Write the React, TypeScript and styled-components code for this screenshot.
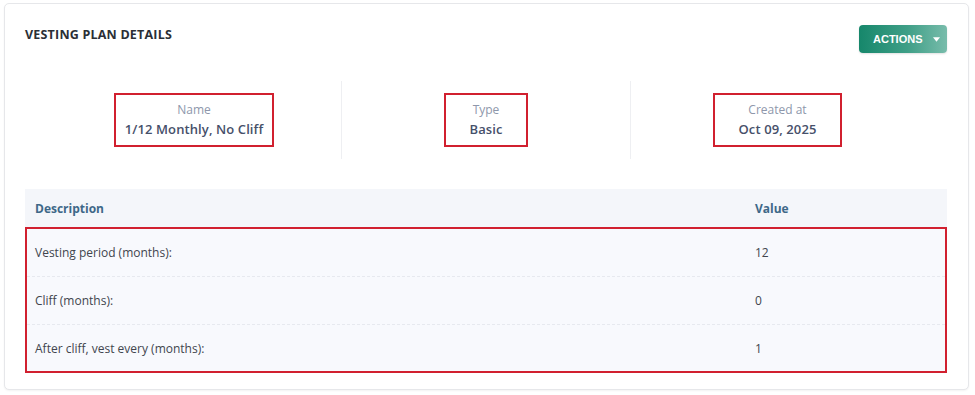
import React from 'react';
import styled, {createGlobalStyle} from 'styled-components';

const GlobalStyle = createGlobalStyle`
  * {
    box-sizing: border-box;
  }

  body {
    margin: 0;
    background: #ffffff;
    font-family: "Open Sans", "Liberation Sans", sans-serif;
  }
`

const infoItems = [
    {label: 'Name', value: '1/12 Monthly, No Cliff', padX: 9},
    {label: 'Type', value: 'Basic', padX: 23},
    {label: 'Created at', value: 'Oct 09, 2025', padX: 24},
];

const rows = [
    {description: 'Vesting period (months):', value: '12'},
    {description: 'Cliff (months):', value: '0'},
    {description: 'After cliff, vest every (months):', value: '1'},
];

export default function App() {
    return (
        <Page>
            <GlobalStyle/>
            <Card>
                <Header>
                    <Title>Vesting Plan Details</Title>
                    <ActionsButton>
                        Actions
                        <Caret viewBox="0 0 8 5">
                            <path d="M0 0 L8 0 L4 5 Z" fill="#ffffff"/>
                        </Caret>
                    </ActionsButton>
                </Header>

                <InfoRow>
                    {infoItems.map((item, index) => (
                        <InfoCell key={item.label} $divider={index > 0}>
                            <Highlight $padX={item.padX}>
                                <InfoLabel>{item.label}</InfoLabel>
                                <InfoValue>{item.value}</InfoValue>
                            </Highlight>
                        </InfoCell>
                    ))}
                </InfoRow>

                <Table>
                    <HeadRow>
                        <HeadCell>Description</HeadCell>
                        <HeadCell>Value</HeadCell>
                    </HeadRow>
                    <Body>
                        {rows.map((row, index) => (
                            <BodyRow key={row.description} $last={index === rows.length - 1}>
                                <BodyCell>{row.description}</BodyCell>
                                <BodyCell>{row.value}</BodyCell>
                            </BodyRow>
                        ))}
                    </Body>
                </Table>
            </Card>
        </Page>
    );
}

const Page = styled.div`
  width: 975px;
  height: 395px;
  padding: 3px 6px 5px 4px;
`

const Card = styled.section`
  height: 100%;
  background: #ffffff;
  border: 1px solid #e6e7ea;
  border-radius: 5px;
  box-shadow: 0 1px 2px rgba(0, 0, 0, 0.05);
  padding: 21px 21px 16px 20px;
  display: flex;
  flex-direction: column;
`

const Header = styled.div`
  display: flex;
  justify-content: space-between;
  align-items: flex-start;
`

const Title = styled.h2`
  margin: 1px 0 0;
  font-size: 12.5px;
  font-weight: 700;
  letter-spacing: 0.2px;
  text-transform: uppercase;
  color: #2b2f36;
`

const ActionsButton = styled.button`
  display: flex;
  align-items: center;
  gap: 10px;
  height: 28px;
  width: 88px;
  padding: 0 0 0 14px;
  border: none;
  border-radius: 4px;
  background: linear-gradient(90deg, #16876b 0%, #3f9f87 55%, #78bcab 100%);
  color: #ffffff;
  font-family: "Liberation Sans", Arial, sans-serif;
  font-size: 11px;
  font-weight: 700;
  text-transform: uppercase;
  box-shadow: 0 1px 2px rgba(0, 0, 0, 0.12);
`

const Caret = styled.svg`
  width: 7px;
  height: 5px;
`

const InfoRow = styled.div`
  display: grid;
  grid-template-columns: 294px 289px 294px;
  margin: 28px 0 0 22px;
  height: 84px;
`

const InfoCell = styled.div<{ $divider: boolean }>`
  display: flex;
  align-items: center;
  justify-content: center;
  border-left: ${({$divider}) => ($divider ? '1px solid #eeeff2' : 'none')};
`

const Highlight = styled.div<{ $padX: number }>`
  display: flex;
  flex-direction: column;
  align-items: center;
  gap: 2px;
  padding: 6px ${({$padX}) => $padX}px 7px;
  border: 2px solid #d1202f;
`

const InfoLabel = styled.span`
  font-size: 12px;
  color: #8e97ab;
`

const InfoValue = styled.span`
  font-size: 13px;
  font-weight: 600;
  color: #46506a;
  letter-spacing: 0.1px;
`

const Table = styled.div`
  margin-top: 30px;
  display: flex;
  flex-direction: column;
`

const HeadRow = styled.div`
  display: grid;
  grid-template-columns: 720px 1fr;
  height: 38px;
  align-items: center;
  background: #f4f6fa;
  padding-left: 10px;
`

const HeadCell = styled.div`
  font-size: 12px;
  font-weight: 700;
  color: #3e6888;
`

const Body = styled.div`
  border: 2px solid #d1202f;
  background: #f8f9fd;
  display: flex;
  flex-direction: column;
`

const BodyRow = styled.div<{ $last: boolean }>`
  display: grid;
  grid-template-columns: 720px 1fr;
  height: ${({$last}) => ($last ? '46px' : '48px')};
  align-items: center;
  padding-left: 8px;
  border-bottom: ${({$last}) => ($last ? 'none' : '1px dashed #e7e9ef')};
`

const BodyCell = styled.div`
  font-size: 12px;
  color: #41454e;
`
